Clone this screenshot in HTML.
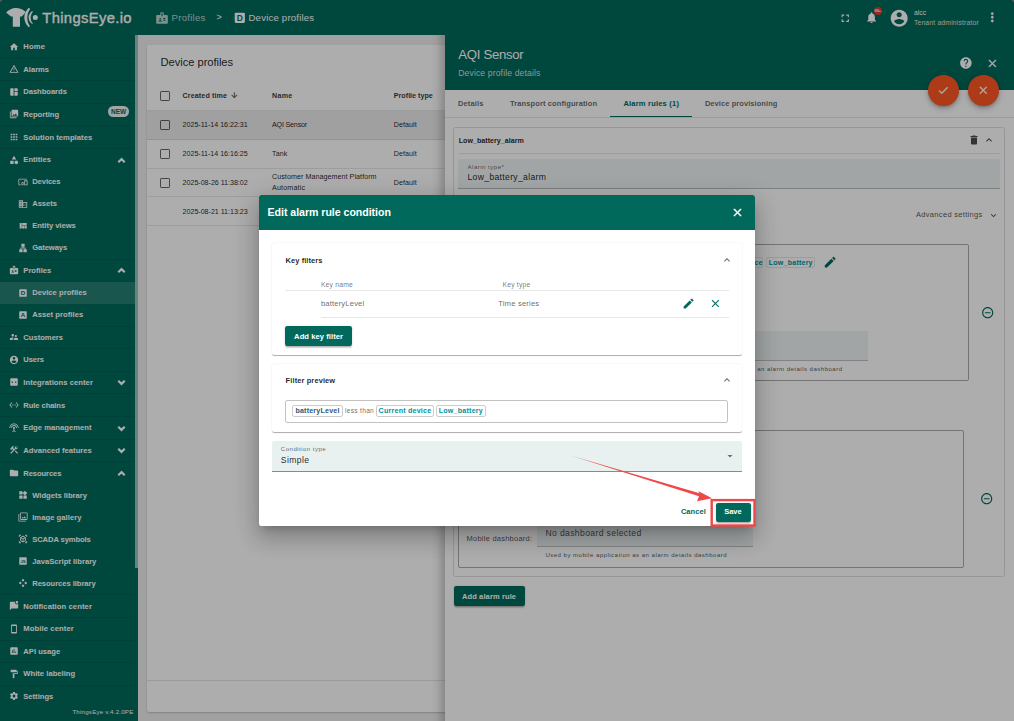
<!DOCTYPE html>
<html lang="en"><head><meta charset="utf-8"><title>ThingsEye.io - Device profiles</title>
<style>
*{box-sizing:border-box;margin:0;padding:0}
html,body{width:1014px;height:721px;overflow:hidden;background:#eee;font-family:"Liberation Sans",sans-serif;color:rgba(0,0,0,.87)}
.abs,.ic,.sep,.sel,.t{position:absolute}
.ic{display:block;overflow:visible}
.t{white-space:nowrap;line-height:12px}
#hdr{position:absolute;left:0;top:0;width:1014px;height:35.2px;background:#00695c}
#side{position:absolute;left:0;top:35.2px;width:138px;height:686px;background:#00695c}
.sep{left:0;width:135px;height:1px;background:rgba(0,0,0,.065)}
.sel{left:0;width:135px;height:22px;background:rgba(255,255,255,.15)}
#card{position:absolute;left:147px;top:45px;width:858px;height:666.6px;background:#fff;border-radius:2px;box-shadow:0 1px 2px rgba(0,0,0,.2)}
.row{position:absolute;left:147px;width:858px;border-bottom:1px solid rgba(0,0,0,.09)}
.cb{position:absolute;width:10px;height:10px;border:1.1px solid rgba(0,0,0,.6);border-radius:1.2px}
#drawer{position:absolute;left:445px;top:35.2px;width:569px;height:686px;background:#fff}
#dshadow{position:absolute;left:431px;top:35.2px;width:14px;height:686px;background:linear-gradient(to right,rgba(0,0,0,0),rgba(0,0,0,.04) 40%,rgba(0,0,0,.2))}
#dhead{position:absolute;left:0;top:0;width:569px;height:55.2px;background:#00695c}
#backdrop{position:absolute;left:0;top:0;width:1014px;height:721px;background:rgba(0,0,0,.32)}
#dlg{position:absolute;left:258.8px;top:195px;width:496px;height:331.2px;background:#fff;border-radius:2.2px;
 box-shadow:0 6px 8px -4px rgba(0,0,0,.2),0 13px 21px 2px rgba(0,0,0,.14),0 5px 25px 4px rgba(0,0,0,.12)}
#dlgt{position:absolute;left:0;top:0;width:496px;height:35.2px;background:#00695c;border-radius:2.2px 2.2px 0 0}
.panel{position:absolute;background:#fff;border-radius:2.2px;box-shadow:0 1.6px .6px -1.1px rgba(0,0,0,.2),0 1.1px .6px 0 rgba(0,0,0,.14),0 .6px 1.6px 0 rgba(0,0,0,.12)}
.chip{position:absolute;border:1px solid rgba(0,0,0,.1);border-radius:2.2px}
.btn{position:absolute;background:#00695c;border-radius:2.2px;
 box-shadow:0 1.6px .6px -1.1px rgba(0,0,0,.2),0 1.1px 1.1px 0 rgba(0,0,0,.14),0 .6px 2.8px 0 rgba(0,0,0,.12)}
.fab{position:absolute;width:30.8px;height:30.8px;border-radius:50%;background:#ff5722;box-shadow:0 1.6px 2.8px -.6px rgba(0,0,0,.2),0 3.3px 5.5px 0 rgba(0,0,0,.14),0 .6px 10px 0 rgba(0,0,0,.12)}
</style></head><body>

<!-- ============ top toolbar ============ -->
<div id="hdr"></div>
<svg class="ic" style="left:0;top:0;width:140px;height:35px" viewBox="0 0 140 35">
  <path fill="#fff" d="M6.100 12.500Q10.500 7.900 15.700 7.900Q21.500 7.900 25.800 12.100L21.900 16.400H20V26.800H12.800V16.400H10.900Z"/>
  <path fill="#fff" d="M28.700 7.800Q24.200 12.500 24.300 17.700Q24.500 23 28.700 27.300Q30 26.600 29.800 26.300Q27.100 22.500 27.200 17.700Q27.300 12.500 30 8.900Q30 8.300 28.700 7.800Z"/>
  <path fill="#fff" d="M32 10.900Q28.500 14 28.500 17.600Q28.500 21 32 24.100Q33 23.600 32.800 23.300Q30.600 21 30.600 17.600Q30.600 14 32.900 11.700Q33 11.300 32 10.900Z"/>
  <circle fill="#fff" cx="35.300" cy="17.500" r="2.500"/>
</svg>
<div class="t" style="left:42.30px;top:12.40px;font-size:14.8px;letter-spacing:0.340px;color:#ffffff;line-height:20px;margin-top:-4px;-webkit-text-stroke:.35px #fff">ThingsEye.io</div>
<svg class="ic" style="left:155.20px;top:10.90px;width:14px;height:14px;" viewBox="0 0 24 24"><path fill="rgba(255,255,255,.72)" d="M20 7h-5V4c0-1.100-.9-2-2-2h-2c-1.100 0-2 .9-2 2v3H4c-1.100 0-2 .9-2 2v11c0 1.100.9 2 2 2h16c1.100 0 2-.9 2-2V9c0-1.100-.9-2-2-2zM9 12c.83 0 1.500.67 1.500 1.500S9.830 15 9 15s-1.500-.67-1.500-1.500S8.170 12 9 12zm3 6H6v-.75c0-1 2-1.500 3-1.500s3 .5 3 1.500V18zm1-9h-2V4h2v5zm5 7.500h-4V15h4v1.500zm0-3h-4V12h4v1.500z"/></svg>
<div class="t" style="left:171.50px;top:11.80px;font-size:9.6px;letter-spacing:0.270px;color:rgba(255,255,255,.72);">Profiles</div>
<div class="t" style="left:216.50px;top:11.40px;font-size:9px;font-weight:bold;color:rgba(255,255,255,.8);">&gt;</div>
<svg class="ic" style="left:232.70px;top:11.40px;width:13.6px;height:13.6px" viewBox="0 0 24 24"><rect x="3" y="3" width="18" height="18" rx="2" fill="#ffffff"/><text x="12" y="17.3" text-anchor="middle" font-family="Liberation Sans, sans-serif" font-weight="bold" font-size="15" fill="#00695c">D</text></svg>
<div class="t" style="left:248.50px;top:11.80px;font-size:9.6px;letter-spacing:0.196px;color:#ffffff;">Device profiles</div>
<svg class="ic" style="left:838.95px;top:11.65px;width:12.5px;height:12.5px;" viewBox="0 0 24 24"><path fill="#ffffff" d="M7 14H5v5h5v-2H7v-3zm-2-4h2V7h3V5H5v5zm12 7h-3v2h5v-5h-2v3zM14 5v2h3v3h2V5h-5z"/></svg>
<svg class="ic" style="left:864.90px;top:11.40px;width:13.2px;height:13.2px;" viewBox="0 0 24 24"><path fill="#ffffff" d="M12 22c1.100 0 2-.9 2-2h-4c0 1.100.89 2 2 2zm6-6v-5c0-3.070-1.640-5.640-4.500-6.320V4c0-.83-.67-1.500-1.500-1.500s-1.500.67-1.500 1.500v.68C7.630 5.360 6 7.920 6 11v5l-2 2v1h16v-1l-2-2z"/></svg>
<div class="abs" style="left:873.8px;top:7.1px;width:8.4px;height:8.4px;border-radius:50%;background:#e53935"></div>
<div class="t" style="left:874.6px;top:8.7px;font-size:3.8px;line-height:5px;color:#fff;font-weight:bold">99+</div>
<svg class="ic" style="left:889.30px;top:7.60px;width:20.4px;height:20.4px;" viewBox="0 0 24 24"><path fill="#ffffff" d="M12 2C6.480 2 2 6.480 2 12s4.480 10 10 10 10-4.480 10-10S17.520 2 12 2zm0 3c1.660 0 3 1.340 3 3s-1.340 3-3 3-3-1.340-3-3 1.340-3 3-3zm0 14.200c-2.500 0-4.710-1.280-6-3.220.030-1.990 4-3.080 6-3.080 1.990 0 5.970 1.090 6 3.080-1.290 1.940-3.500 3.220-6 3.220z"/></svg>
<div class="t" style="left:913.90px;top:6.90px;font-size:6.8px;letter-spacing:0.069px;color:#ffffff;">alcc</div>
<div class="t" style="left:913.90px;top:17.30px;font-size:6.8px;letter-spacing:0.173px;color:rgba(255,255,255,.85);">Tenant administrator</div>
<svg class="ic" style="left:984.70px;top:10.30px;width:14.6px;height:14.6px;stroke:#fff;stroke-width:.6" viewBox="0 0 24 24"><path fill="#ffffff" d="M12 8c1.100 0 2-.9 2-2s-.9-2-2-2-2 .9-2 2 .9 2 2 2zm0 2c-1.100 0-2 .9-2 2s.9 2 2 2 2-.9 2-2-.9-2-2-2zm0 6c-1.100 0-2 .9-2 2s.9 2 2 2 2-.9 2-2-.9-2-2-2z"/></svg>

<!-- ============ side menu ============ -->
<div id="side"></div>
<svg class="ic" style="left:8.70px;top:41.70px;width:10px;height:10px;" viewBox="0 0 24 24"><path fill="#ffffff" d="M10 20v-6h4v6h5v-8h3L12 3 2 12h3v8z"/></svg>
<div class="t" style="left:23.30px;top:41.30px;font-size:7.6px;font-weight:bold;letter-spacing:0.195px;color:#ffffff;">Home</div>
<div class="sep" style="top:57.60px"></div>
<svg class="ic" style="left:8.70px;top:64.20px;width:10px;height:10px;" viewBox="0 0 24 24"><path fill="#ffffff" d="M12 5.99L19.53 19H4.47L12 5.99M12 2L1 21h22L12 2zm1 14h-2v2h2v-2zm0-6h-2v4h2v-4z"/></svg>
<div class="t" style="left:23.30px;top:63.80px;font-size:7.6px;font-weight:bold;letter-spacing:0.006px;color:#ffffff;">Alarms</div>
<div class="sep" style="top:80.20px"></div>
<svg class="ic" style="left:8.70px;top:86.80px;width:10px;height:10px;" viewBox="0 0 24 24"><path fill="#ffffff" d="M11 21H5c-1.1 0-2-.9-2-2V5c0-1.100.9-2 2-2h6v18zm2 0h6c1.100 0 2-.9 2-2v-7h-8v9zm8-11V5c0-1.100-.9-2-2-2h-6v7h8z"/></svg>
<div class="t" style="left:23.30px;top:86.40px;font-size:7.6px;font-weight:bold;letter-spacing:-0.036px;color:#ffffff;">Dashboards</div>
<div class="sep" style="top:102.70px"></div>
<svg class="ic" style="left:8.70px;top:109.30px;width:10px;height:10px;" viewBox="0 0 24 24"><path fill="#ffffff" d="M22 16V4c0-1.100-.9-2-2-2H8c-1.100 0-2 .9-2 2v12c0 1.100.9 2 2 2h12c1.100 0 2-.9 2-2zm-11-4l2.030 2.710L16 11l4 5H8l3-4zM2 6v14c0 1.100.9 2 2 2h14v-2H4V6H2z"/></svg>
<div class="t" style="left:23.30px;top:108.90px;font-size:7.6px;font-weight:bold;letter-spacing:-0.011px;color:#ffffff;">Reporting</div>
<div class="sep" style="top:125.40px"></div>
<svg class="ic" style="left:8.70px;top:132.00px;width:10px;height:10px;" viewBox="0 0 24 24"><path fill="#ffffff" d="M4 8h4V4H4v4zm6 12h4v-4h-4v4zm-6 0h4v-4H4v4zm0-6h4v-4H4v4zm6 0h4v-4h-4v4zm6-10v4h4V4h-4zm-6 4h4V4h-4v4zm6 6h4v-4h-4v4zm0 6h4v-4h-4v4z"/></svg>
<div class="t" style="left:23.30px;top:131.60px;font-size:7.6px;font-weight:bold;letter-spacing:0.054px;color:#ffffff;">Solution templates</div>
<div class="sep" style="top:148.10px"></div>
<svg class="ic" style="left:8.70px;top:154.70px;width:10px;height:10px;" viewBox="0 0 24 24"><path fill="#ffffff" d="M12 2l-5.500 9h11z M17.500 13a4.500 4.500 0 100 9 4.500 4.500 0 000-9z M3 13.500h8v8H3z"/></svg>
<div class="t" style="left:23.30px;top:154.30px;font-size:7.6px;font-weight:bold;letter-spacing:0.021px;color:#ffffff;">Entities</div>
<svg class="ic" style="left:115.00px;top:153.50px;width:13px;height:13px;stroke:#fff;stroke-width:1.9" viewBox="0 0 24 24"><path fill="#ffffff" d="M12 8l-6 6 1.410 1.410L12 10.830l4.590 4.580L18 14z"/></svg>
<svg class="ic" style="left:17.70px;top:176.90px;width:10px;height:10px;" viewBox="0 0 24 24"><path fill="#ffffff" d="M3 6h18V4H3c-1.100 0-2 .9-2 2v12c0 1.100.9 2 2 2h4v-2H3V6zm10 6H9v1.780c-.61.550-1 1.330-1 2.220s.39 1.670 1 2.220V20h4v-1.780c.61-.55 1-1.340 1-2.220s-.39-1.670-1-2.220V12zm-2 5.500c-.83 0-1.500-.67-1.500-1.500s.67-1.500 1.500-1.500 1.500.67 1.500 1.500-.67 1.500-1.500 1.500zM22 8h-6c-.5 0-1 .5-1 1v10c0 .5.5 1 1 1h6c.5 0 1-.5 1-1V9c0-.5-.5-1-1-1zm-1 10h-4v-8h4v8z"/></svg>
<div class="t" style="left:32.20px;top:175.90px;font-size:7.6px;font-weight:bold;letter-spacing:-0.072px;color:#ffffff;">Devices</div>
<svg class="ic" style="left:17.70px;top:198.90px;width:10px;height:10px;" viewBox="0 0 24 24"><path fill="#ffffff" d="M12 7V3H2v18h20V7H12zM6 19H4v-2h2v2zm0-4H4v-2h2v2zm0-4H4V9h2v2zm0-4H4V5h2v2zm4 12H8v-2h2v2zm0-4H8v-2h2v2zm0-4H8V9h2v2zm0-4H8V5h2v2zm10 12h-8v-2h2v-2h-2v-2h2v-2h-2V9h8v10zm-2-8h-2v2h2v-2zm0 4h-2v2h2v-2z"/></svg>
<div class="t" style="left:32.20px;top:197.90px;font-size:7.6px;font-weight:bold;letter-spacing:-0.045px;color:#ffffff;">Assets</div>
<svg class="ic" style="left:17.70px;top:220.90px;width:10px;height:10px;" viewBox="0 0 24 24"><path fill="#ffffff" d="M10 18h5v-6h-5v6zm-6 0h5V5H4v13zm12 0h5v-6h-5v6zM10 5v6h11V5H10z"/></svg>
<div class="t" style="left:32.20px;top:219.90px;font-size:7.6px;font-weight:bold;letter-spacing:-0.030px;color:#ffffff;">Entity views</div>
<svg class="ic" style="left:17.70px;top:242.90px;width:10px;height:10px;" viewBox="0 0 24 24"><path fill="#ffffff" d="M13 22h8v-7h-3v-4h-5V9h3V2H8v7h3v2H6v4H3v7h8v-7H8v-2h8v2h-3z"/></svg>
<div class="t" style="left:32.20px;top:241.90px;font-size:7.6px;font-weight:bold;letter-spacing:-0.055px;color:#ffffff;">Gateways</div>
<div class="sep" style="top:258.70px"></div>
<svg class="ic" style="left:8.70px;top:265.30px;width:10px;height:10px;" viewBox="0 0 24 24"><path fill="#ffffff" d="M20 7h-5V4c0-1.100-.9-2-2-2h-2c-1.100 0-2 .9-2 2v3H4c-1.100 0-2 .9-2 2v11c0 1.100.9 2 2 2h16c1.100 0 2-.9 2-2V9c0-1.100-.9-2-2-2zM9 12c.83 0 1.500.67 1.500 1.500S9.830 15 9 15s-1.500-.67-1.500-1.500S8.170 12 9 12zm3 6H6v-.75c0-1 2-1.500 3-1.500s3 .5 3 1.500V18zm1-9h-2V4h2v5zm5 7.500h-4V15h4v1.500zm0-3h-4V12h4v1.500z"/></svg>
<div class="t" style="left:23.30px;top:264.90px;font-size:7.6px;font-weight:bold;letter-spacing:0.018px;color:#ffffff;">Profiles</div>
<svg class="ic" style="left:115.00px;top:264.10px;width:13px;height:13px;stroke:#fff;stroke-width:1.9" viewBox="0 0 24 24"><path fill="#ffffff" d="M12 8l-6 6 1.410 1.410L12 10.830l4.590 4.580L18 14z"/></svg>
<div class="sel" style="top:281.50px"></div>
<svg class="ic" style="left:17.70px;top:287.50px;width:10px;height:10px" viewBox="0 0 24 24"><rect x="3" y="3" width="18" height="18" rx="2" fill="#ffffff"/><text x="12" y="17.3" text-anchor="middle" font-family="Liberation Sans, sans-serif" font-weight="bold" font-size="15" fill="#00695c">D</text></svg>
<div class="t" style="left:32.20px;top:286.50px;font-size:7.6px;font-weight:bold;letter-spacing:0.031px;color:#ffffff;">Device profiles</div>
<svg class="ic" style="left:17.70px;top:309.60px;width:10px;height:10px" viewBox="0 0 24 24"><rect x="3" y="3" width="18" height="18" rx="2" fill="#ffffff"/><text x="12" y="17.3" text-anchor="middle" font-family="Liberation Sans, sans-serif" font-weight="bold" font-size="15" fill="#00695c">A</text></svg>
<div class="t" style="left:32.20px;top:308.60px;font-size:7.6px;font-weight:bold;letter-spacing:0.057px;color:#ffffff;">Asset profiles</div>
<div class="sep" style="top:325.60px"></div>
<svg class="ic" style="left:8.70px;top:332.20px;width:10px;height:10px;" viewBox="0 0 24 24"><path fill="#ffffff" d="M16.500 12c1.380 0 2.490-1.120 2.490-2.500S17.880 7 16.500 7C15.120 7 14 8.120 14 9.500s1.120 2.500 2.500 2.500zM9 11c1.660 0 2.990-1.340 2.990-3S10.660 5 9 5C7.340 5 6 6.340 6 8s1.340 3 3 3zm7.500 3c-1.830 0-5.500.920-5.500 2.750V19h11v-2.250c0-1.830-3.670-2.750-5.500-2.750zM9 13c-2.330 0-7 1.170-7 3.500V19h7v-2.250c0-.85.330-2.340 2.370-3.470C10.500 13.100 9.660 13 9 13z"/></svg>
<div class="t" style="left:23.30px;top:331.80px;font-size:7.6px;font-weight:bold;letter-spacing:0.012px;color:#ffffff;">Customers</div>
<div class="sep" style="top:348.20px"></div>
<svg class="ic" style="left:8.70px;top:354.80px;width:10px;height:10px;" viewBox="0 0 24 24"><path fill="#ffffff" d="M12 2C6.480 2 2 6.480 2 12s4.480 10 10 10 10-4.480 10-10S17.520 2 12 2zm0 3c1.660 0 3 1.340 3 3s-1.340 3-3 3-3-1.340-3-3 1.340-3 3-3zm0 14.200c-2.500 0-4.710-1.280-6-3.220.030-1.990 4-3.080 6-3.080 1.990 0 5.970 1.090 6 3.080-1.290 1.940-3.500 3.220-6 3.220z"/></svg>
<div class="t" style="left:23.30px;top:354.40px;font-size:7.6px;font-weight:bold;letter-spacing:-0.107px;color:#ffffff;">Users</div>
<div class="sep" style="top:370.80px"></div>
<svg class="ic" style="left:8.70px;top:377.40px;width:10px;height:10px;" viewBox="0 0 24 24"><path fill="#ffffff" d="M19 3H5c-1.100 0-2 .9-2 2v14c0 1.100.9 2 2 2h14c1.100 0 2-.9 2-2V5c0-1.100-.9-2-2-2zM9.500 13.500h-3v-3h3v3zm8 0h-3v-3h3v3z"/></svg>
<div class="t" style="left:23.30px;top:377.00px;font-size:7.6px;font-weight:bold;letter-spacing:0.066px;color:#ffffff;">Integrations center</div>
<svg class="ic" style="left:115.00px;top:376.20px;width:13px;height:13px;stroke:#fff;stroke-width:1.9" viewBox="0 0 24 24"><path fill="#ffffff" d="M16.590 8.590L12 13.170 7.410 8.590 6 10l6 6 6-6z"/></svg>
<div class="sep" style="top:393.40px"></div>
<svg class="ic" style="left:8.70px;top:400.00px;width:10px;height:10px;" viewBox="0 0 24 24"><path fill="#ffffff" d="M7.770 6.760L6.230 5.480.820 12l5.410 6.520 1.540-1.280L3.420 12l4.350-5.240zM7 13h2v-2H7v2zm10-2h-2v2h2v-2zm-6 2h2v-2h-2v2zm6.770-7.520l-1.540 1.280L20.580 12l-4.350 5.240 1.540 1.280L23.180 12l-5.410-6.520z"/></svg>
<div class="t" style="left:23.30px;top:399.60px;font-size:7.6px;font-weight:bold;letter-spacing:-0.076px;color:#ffffff;">Rule chains</div>
<div class="sep" style="top:416.10px"></div>
<svg class="ic" style="left:8.70px;top:422.70px;width:10px;height:10px;" viewBox="0 0 24 24"><path fill="#ffffff" d="M12 5c-3.870 0-7 3.130-7 7h2c0-2.760 2.240-5 5-5s5 2.240 5 5h2c0-3.870-3.130-7-7-7zm1 9.290c.880-.39 1.500-1.260 1.500-2.290 0-1.380-1.120-2.500-2.500-2.500S9.500 10.620 9.500 12c0 1.020.620 1.900 1.500 2.290v3.300L7.590 21 9 22.410l3-3 3 3L16.410 21 13 17.590v-3.300zM12 1C5.930 1 1 5.930 1 12h2c0-4.970 4.030-9 9-9s9 4.030 9 9h2c0-6.070-4.930-11-11-11z"/></svg>
<div class="t" style="left:23.30px;top:422.30px;font-size:7.6px;font-weight:bold;letter-spacing:0.045px;color:#ffffff;">Edge management</div>
<svg class="ic" style="left:115.00px;top:421.50px;width:13px;height:13px;stroke:#fff;stroke-width:1.9" viewBox="0 0 24 24"><path fill="#ffffff" d="M16.590 8.590L12 13.170 7.410 8.590 6 10l6 6 6-6z"/></svg>
<div class="sep" style="top:438.70px"></div>
<svg class="ic" style="left:8.70px;top:445.30px;width:10px;height:10px;" viewBox="0 0 24 24"><path fill="#ffffff" d="M13.783 15.172l2.121-2.121 5.996 5.996-2.121 2.121zM17.500 10c1.930 0 3.500-1.570 3.500-3.500 0-.58-.16-1.120-.41-1.600l-2.700 2.700-1.490-1.490 2.700-2.700c-.48-.25-1.020-.41-1.600-.41C15.570 3 14 4.570 14 6.500c0 .41.080.8.210 1.160l-1.850 1.850-1.780-1.780.71-.71-1.410-1.410L12 3.490a3 3 0 00-4.240 0L4.220 7.030l1.410 1.410H2.810l-.71.71 3.540 3.540.71-.71V9.150l1.410 1.410.71-.71 1.780 1.780-7.410 7.410 2.120 2.120L16.340 9.790c.36.130.75.210 1.160.21z"/></svg>
<div class="t" style="left:23.30px;top:444.90px;font-size:7.6px;font-weight:bold;letter-spacing:0.037px;color:#ffffff;">Advanced features</div>
<svg class="ic" style="left:115.00px;top:444.10px;width:13px;height:13px;stroke:#fff;stroke-width:1.9" viewBox="0 0 24 24"><path fill="#ffffff" d="M16.590 8.590L12 13.170 7.410 8.590 6 10l6 6 6-6z"/></svg>
<div class="sep" style="top:461.40px"></div>
<svg class="ic" style="left:8.70px;top:468.00px;width:10px;height:10px;" viewBox="0 0 24 24"><path fill="#ffffff" d="M10 4H4c-1.100 0-1.990.9-1.990 2L2 18c0 1.100.9 2 2 2h16c1.100 0 2-.9 2-2V8c0-1.100-.9-2-2-2h-8l-2-2z"/></svg>
<div class="t" style="left:23.30px;top:467.60px;font-size:7.6px;font-weight:bold;letter-spacing:-0.096px;color:#ffffff;">Resources</div>
<svg class="ic" style="left:115.00px;top:466.80px;width:13px;height:13px;stroke:#fff;stroke-width:1.9" viewBox="0 0 24 24"><path fill="#ffffff" d="M12 8l-6 6 1.410 1.410L12 10.830l4.590 4.580L18 14z"/></svg>
<svg class="ic" style="left:17.70px;top:490.10px;width:10px;height:10px;" viewBox="0 0 24 24"><path fill="#ffffff" d="M13 13v8h8v-8h-8zM3 21h8v-8H3v8zM3 3v8h8V3H3zm13.660-1.310L11 7.340 16.660 13l5.660-5.660-5.660-5.650z"/></svg>
<div class="t" style="left:32.20px;top:490.10px;font-size:7.6px;font-weight:bold;letter-spacing:-0.002px;color:#ffffff;">Widgets library</div>
<svg class="ic" style="left:17.70px;top:512.10px;width:10px;height:10px;" viewBox="0 0 24 24"><path fill="#ffffff" d="M15.960 10.290l-2.750 3.540-1.960-2.360L8.500 15h11l-3.540-4.710zM3 5H1v16c0 1.100.9 2 2 2h16v-2H3V5zm18-4H7c-1.100 0-2 .9-2 2v14c0 1.100.9 2 2 2h14c1.100 0 2-.9 2-2V3c0-1.100-.9-2-2-2zm0 16H7V3h14v14z"/></svg>
<div class="t" style="left:32.20px;top:512.10px;font-size:7.6px;font-weight:bold;letter-spacing:0.060px;color:#ffffff;">Image gallery</div>
<svg class="ic" style="left:17.70px;top:534.10px;width:10px;height:10px;" viewBox="0 0 24 24"><path fill="#ffffff" d="M18.250 7.600l-5.500-3.180c-.46-.27-1.040-.27-1.500 0L5.750 7.600c-.46.270-.75.760-.75 1.300v6.350c0 .54.290 1.030.75 1.300l5.500 3.180c.46.270 1.040.270 1.500 0l5.500-3.180c.46-.27.75-.76.75-1.300V8.900c0-.54-.29-1.030-.75-1.300zM7 14.960v-4.620l4 2.320v4.610l-4-2.310zm5-4.030L8 8.610l4-2.310 4 2.310-4 2.320zm1 6.340v-4.610l4-2.320v4.620l-4 2.310zM7 2H3.500C2.670 2 2 2.670 2 3.500V7h2V4h3V2zm10 0h3.500c.83 0 1.500.67 1.500 1.500V7h-2V4h-3V2zM7 22H3.500c-.83 0-1.500-.67-1.500-1.500V17h2v3h3v2zm10 0h3.500c.83 0 1.500-.67 1.500-1.500V17h-2v3h-3v2z"/></svg>
<div class="t" style="left:32.20px;top:534.10px;font-size:7.6px;font-weight:bold;letter-spacing:-0.082px;color:#ffffff;">SCADA symbols</div>
<svg class="ic" style="left:17.70px;top:556.10px;width:10px;height:10px" viewBox="0 0 24 24"><rect x="3" y="3" width="18" height="18" rx="2" fill="#ffffff"/><text x="12" y="17.3" text-anchor="middle" font-family="Liberation Sans, sans-serif" font-weight="bold" font-size="10" fill="#00695c">JS</text></svg>
<div class="t" style="left:32.20px;top:556.10px;font-size:7.6px;font-weight:bold;letter-spacing:0.024px;color:#ffffff;">JavaScript library</div>
<svg class="ic" style="left:17.70px;top:578.10px;width:10px;height:10px;" viewBox="0 0 24 24"><path fill="#ffffff" d="M12 2l3.500 3.500L12 9 8.500 5.500zM18.500 8.500L22 12l-3.500 3.500L15 12zM5.500 8.500L9 12l-3.500 3.500L2 12zM12 15l3.500 3.500L12 22l-3.500-3.500z"/></svg>
<div class="t" style="left:32.20px;top:578.10px;font-size:7.6px;font-weight:bold;letter-spacing:-0.044px;color:#ffffff;">Resources library</div>
<div class="sep" style="top:594.20px"></div>
<svg class="ic" style="left:8.70px;top:600.80px;width:10px;height:10px;" viewBox="0 0 24 24"><path fill="#ffffff" d="M22 7v9c0 1.100-.9 2-2 2H6l-4 4V4c0-1.100.9-2 2-2h10.100c-.07.320-.10.660-.10 1 0 2.760 2.240 5 5 5 1.130 0 2.160-.37 3-1zM16 3c0 1.660 1.340 3 3 3s3-1.340 3-3-1.340-3-3-3-3 1.340-3 3z"/></svg>
<div class="t" style="left:23.30px;top:601.00px;font-size:7.6px;font-weight:bold;letter-spacing:0.104px;color:#ffffff;">Notification center</div>
<div class="sep" style="top:616.90px"></div>
<svg class="ic" style="left:8.70px;top:623.50px;width:10px;height:10px;" viewBox="0 0 24 24"><path fill="#ffffff" d="M17 1.010L7 1c-1.100 0-2 .9-2 2v18c0 1.100.9 2 2 2h10c1.100 0 2-.9 2-2V3c0-1.100-.9-1.990-2-1.990zM17 19H7V5h10v14z"/></svg>
<div class="t" style="left:23.30px;top:623.40px;font-size:7.6px;font-weight:bold;letter-spacing:0.126px;color:#ffffff;">Mobile center</div>
<div class="sep" style="top:639.50px"></div>
<svg class="ic" style="left:8.70px;top:646.10px;width:10px;height:10px;" viewBox="0 0 24 24"><path fill="#ffffff" d="M19 3H5c-1.100 0-2 .9-2 2v14c0 1.100.9 2 2 2h14c1.100 0 2-.9 2-2V5c0-1.100-.9-2-2-2zM9 17H7v-7h2v7zm4 0h-2V7h2v10zm4 0h-2v-4h2v4z"/></svg>
<div class="t" style="left:23.30px;top:645.70px;font-size:7.6px;font-weight:bold;letter-spacing:0.019px;color:#ffffff;">API usage</div>
<div class="sep" style="top:662.20px"></div>
<svg class="ic" style="left:8.70px;top:668.80px;width:10px;height:10px;" viewBox="0 0 24 24"><path fill="#ffffff" d="M18 4V3c0-.55-.45-1-1-1H5c-.55 0-1 .45-1 1v4c0 .55.45 1 1 1h12c.55 0 1-.45 1-1V6h1v4H9v11c0 .55.45 1 1 1h2c.55 0 1-.45 1-1v-9h8V4h-3z"/></svg>
<div class="t" style="left:23.30px;top:668.40px;font-size:7.6px;font-weight:bold;letter-spacing:0.030px;color:#ffffff;">White labeling</div>
<div class="sep" style="top:684.80px"></div>
<svg class="ic" style="left:8.70px;top:691.40px;width:10px;height:10px;" viewBox="0 0 24 24"><path fill="#ffffff" d="M19.140 12.940c.040-.3.060-.61.060-.940 0-.32-.020-.64-.070-.940l2.030-1.580c.180-.14.230-.41.120-.61l-1.920-3.320c-.12-.22-.37-.29-.59-.22l-2.390.960c-.5-.38-1.030-.7-1.620-.940l-.36-2.540c-.04-.24-.24-.41-.48-.41h-3.840c-.24 0-.43.170-.47.410l-.36 2.540c-.59.240-1.130.570-1.620.940l-2.390-.960c-.22-.08-.47 0-.59.220L2.740 8.870c-.12.210-.08.470.12.610l2.030 1.580c-.05.3-.09.630-.09.940s.020.640.070.940l-2.030 1.580c-.18.140-.23.410-.12.610l1.920 3.320c.12.220.37.290.59.220l2.390-.960c.5.380 1.030.7 1.620.940l.36 2.540c.05.240.24.410.48.410h3.840c.24 0 .44-.17.470-.41l.36-2.540c.59-.24 1.130-.56 1.620-.940l2.390.960c.22.080.47 0 .59-.22l1.920-3.320c.12-.22.070-.47-.12-.61l-2.010-1.580zM12 15.600c-1.980 0-3.600-1.620-3.600-3.600s1.620-3.600 3.600-3.600 3.600 1.620 3.600 3.600-1.620 3.600-3.600 3.600z"/></svg>
<div class="t" style="left:23.30px;top:691.00px;font-size:7.6px;font-weight:bold;letter-spacing:0.003px;color:#ffffff;">Settings</div>
<div class="abs" style="left:107.8px;top:106.3px;width:21.2px;height:10.6px;border-radius:5.3px;background:rgba(255,255,255,.93)"></div>
<div class="t" style="left:110.90px;top:105.90px;font-size:6.5px;font-weight:bold;letter-spacing:0.068px;color:#00695c;">NEW</div>
<div class="abs" style="left:135px;top:35.2px;width:3px;height:532.6px;background:rgba(255,255,255,.6)"></div>
<div class="t" style="left:72.40px;top:705.50px;font-size:6.1px;letter-spacing:0.244px;color:#ffffff;">ThingsEye v.4.2.0PE</div>

<!-- ============ main content: entities table ============ -->
<div id="card"></div>
<div class="t" style="left:160.60px;top:56.10px;font-size:11.2px;letter-spacing:-0.061px;color:rgba(0,0,0,.87);line-height:14px;margin-top:-1px">Device profiles</div>
<div class="abs" style="left:147px;top:110px;width:858px;height:1px;background:rgba(0,0,0,.09)"></div>
<div class="cb" style="left:160.2px;top:90.5px"></div>
<div class="t" style="left:182.60px;top:89.80px;font-size:7.2px;font-weight:bold;letter-spacing:0.071px;color:rgba(0,0,0,.8);">Created time</div>
<svg class="ic" style="left:229.60px;top:91.30px;width:8.6px;height:8.6px;stroke:rgba(0,0,0,.5);stroke-width:.8" viewBox="0 0 24 24"><path fill="rgba(0,0,0,.62)" d="M20 12l-1.410-1.410L13 16.170V4h-2v12.170l-5.580-5.590L4 12l8 8 8-8z"/></svg>
<div class="t" style="left:272.00px;top:89.80px;font-size:7.2px;font-weight:bold;letter-spacing:0.263px;color:rgba(0,0,0,.8);">Name</div>
<div class="t" style="left:393.80px;top:89.80px;font-size:7.2px;font-weight:bold;letter-spacing:-0.010px;color:rgba(0,0,0,.8);">Profile type</div>

<div class="abs" style="left:147px;top:111px;width:858px;height:28px;background:rgba(0,0,0,.075)"></div>
<div class="abs" style="left:147px;top:139px;width:858px;height:1px;background:rgba(0,0,0,.15)"></div>
<div class="cb" style="left:160.2px;top:119.8px"></div>
<div class="t" style="left:182.60px;top:119.40px;font-size:7.15px;letter-spacing:-0.037px;color:rgba(0,0,0,.87);">2025-11-14 16:22:31</div>
<div class="t" style="left:272.00px;top:119.40px;font-size:7.15px;letter-spacing:-0.195px;color:rgba(0,0,0,.87);">AQI Sensor</div>
<div class="t" style="left:393.80px;top:119.40px;font-size:7.15px;letter-spacing:0.041px;color:rgba(0,0,0,.87);">Default</div>

<div class="abs" style="left:147px;top:168px;width:858px;height:1px;background:rgba(0,0,0,.09)"></div>
<div class="cb" style="left:160.2px;top:148.6px"></div>
<div class="t" style="left:182.60px;top:148.20px;font-size:7.15px;letter-spacing:-0.037px;color:rgba(0,0,0,.87);">2025-11-14 16:16:25</div>
<div class="t" style="left:272.00px;top:148.20px;font-size:7.15px;letter-spacing:0.099px;color:rgba(0,0,0,.87);">Tank</div>
<div class="t" style="left:393.80px;top:148.20px;font-size:7.15px;letter-spacing:0.041px;color:rgba(0,0,0,.87);">Default</div>

<div class="abs" style="left:147px;top:196px;width:858px;height:1px;background:rgba(0,0,0,.09)"></div>
<div class="cb" style="left:160.2px;top:178px"></div>
<div class="t" style="left:182.60px;top:177.10px;font-size:7.15px;letter-spacing:-0.037px;color:rgba(0,0,0,.87);">2025-08-26 11:38:02</div>
<div class="t" style="left:272.00px;top:171.00px;font-size:7.15px;letter-spacing:0.051px;color:rgba(0,0,0,.87);">Customer Management Platform</div>
<div class="t" style="left:272.00px;top:182.00px;font-size:7.15px;letter-spacing:0.151px;color:rgba(0,0,0,.87);">Automatic</div>
<div class="t" style="left:393.80px;top:177.10px;font-size:7.15px;letter-spacing:0.041px;color:rgba(0,0,0,.87);">Default</div>

<div class="abs" style="left:147px;top:225px;width:858px;height:1px;background:rgba(0,0,0,.09)"></div>
<div class="t" style="left:182.60px;top:205.60px;font-size:7.15px;letter-spacing:-0.037px;color:rgba(0,0,0,.87);">2025-08-21 11:13:23</div>
<div class="abs" style="left:147px;top:680px;width:858px;height:1px;background:rgba(0,0,0,.1)"></div>

<!-- ============ details drawer ============ -->
<div id="dshadow"></div>
<div id="drawer"><div id="dhead"></div></div>
<div class="t" style="left:458.20px;top:49.40px;font-size:13.2px;letter-spacing:-0.292px;color:#ffffff;line-height:16px;margin-top:-2px">AQI Sensor</div>
<div class="t" style="left:458.20px;top:66.60px;font-size:8.6px;letter-spacing:0.136px;color:rgba(255,255,255,.8);">Device profile details</div>
<svg class="ic" style="left:958.60px;top:56.20px;width:13.8px;height:13.8px;" viewBox="0 0 24 24"><path fill="#ffffff" d="M12 2C6.480 2 2 6.480 2 12s4.480 10 10 10 10-4.480 10-10S17.520 2 12 2zm1 17h-2v-2h2v2zm2.070-7.750l-.9.920C13.450 12.900 13 13.500 13 15h-2v-.5c0-1.100.45-2.100 1.170-2.830l1.240-1.260c.37-.36.59-.86.59-1.410 0-1.100-.9-2-2-2s-2 .9-2 2H8c0-2.210 1.790-4 4-4s4 1.790 4 4c0 .88-.36 1.680-.93 2.250z"/></svg>
<svg class="ic" style="left:985.60px;top:56.60px;width:12.8px;height:12.8px;stroke:#fff;stroke-width:.7" viewBox="0 0 24 24"><path fill="#ffffff" d="M19 6.410L17.590 5 12 10.590 6.410 5 5 6.410 10.590 12 5 17.590 6.410 19 12 13.410 17.590 19 19 17.590 13.410 12z"/></svg>
<div class="fab" style="left:928.3px;top:75.1px"></div>
<svg class="ic" style="left:937.45px;top:84.25px;width:12.5px;height:12.5px;stroke:#fff;stroke-width:.7" viewBox="0 0 24 24"><path fill="#ffffff" d="M9 16.170L4.830 12l-1.420 1.410L9 19 21 7l-1.410-1.410z"/></svg>
<div class="fab" style="left:967.9px;top:75.1px"></div>
<svg class="ic" style="left:977.05px;top:84.25px;width:12.5px;height:12.5px;stroke:#fff;stroke-width:.7" viewBox="0 0 24 24"><path fill="#ffffff" d="M19 6.410L17.590 5 12 10.590 6.410 5 5 6.410 10.590 12 5 17.590 6.410 19 12 13.410 17.590 19 19 17.590 13.410 12z"/></svg>
<div class="abs" style="left:445px;top:116.5px;width:569px;height:1px;background:rgba(0,0,0,.1)"></div>
<div class="t" style="left:458.00px;top:97.60px;font-size:7.5px;font-weight:bold;letter-spacing:0.117px;color:rgba(0,0,0,.62);">Details</div>
<div class="t" style="left:510.00px;top:97.60px;font-size:7.5px;font-weight:bold;letter-spacing:0.110px;color:rgba(0,0,0,.62);">Transport configuration</div>
<div class="t" style="left:623.40px;top:97.60px;font-size:7.5px;font-weight:bold;letter-spacing:0.213px;color:#00695c;">Alarm rules (1)</div>
<div class="t" style="left:704.90px;top:97.60px;font-size:7.5px;font-weight:bold;letter-spacing:0.068px;color:rgba(0,0,0,.62);">Device provisioning</div>
<div class="abs" style="left:610px;top:115.8px;width:82px;height:1.2px;background:#00695c"></div>
<div class="abs" style="left:453.3px;top:126.5px;width:552px;height:450.4px;border:1px solid rgba(0,0,0,.13);border-radius:2.5px"></div>
<div class="t" style="left:458.70px;top:134.90px;font-size:7.1px;font-weight:bold;letter-spacing:0.030px;color:rgba(0,0,0,.87);">Low_battery_alarm</div>
<svg class="ic" style="left:967.80px;top:134.10px;width:12px;height:12px;" viewBox="0 0 24 24"><path fill="rgba(0,0,0,.7)" d="M6 19c0 1.100.9 2 2 2h8c1.100 0 2-.9 2-2V7H6v12zM19 4h-3.500l-1-1h-5l-1 1H5v2h14V4z"/></svg>
<svg class="ic" style="left:983.30px;top:133.80px;width:12px;height:12px;" viewBox="0 0 24 24"><path fill="rgba(0,0,0,.7)" d="M12 8l-6 6 1.410 1.410L12 10.830l4.590 4.580L18 14z"/></svg>
<div class="abs" style="left:458.5px;top:152.8px;width:541.5px;height:1px;background:rgba(0,0,0,.09)"></div>
<div class="abs" style="left:458.4px;top:158.5px;width:541.6px;height:30.9px;background:#edf4f4;border-bottom:1px solid rgba(0,0,0,.22);border-radius:2.2px 2.2px 0 0"></div>
<div class="t" style="left:467.50px;top:161.40px;font-size:6.2px;letter-spacing:0.445px;color:rgba(0,0,0,.6);">Alarm type*</div>
<div class="t" style="left:467.50px;top:171.40px;font-size:8.6px;letter-spacing:0.335px;color:rgba(0,0,0,.87);">Low_battery_alarm</div>
<div class="t" style="left:916.00px;top:208.60px;font-size:7.5px;letter-spacing:0.313px;color:rgba(0,0,0,.7);">Advanced settings</div>
<svg class="ic" style="left:988.10px;top:209.80px;width:11px;height:11px;" viewBox="0 0 24 24"><path fill="rgba(0,0,0,.7)" d="M16.590 8.590L12 13.170 7.410 8.590 6 10l6 6 6-6z"/></svg>
<div class="abs" style="left:458.3px;top:243.6px;width:510.4px;height:137.3px;border:1px solid rgba(0,0,0,.33);border-radius:2px"></div>
<div class="t" style="left:754.60px;top:257.00px;font-size:7.1px;font-weight:bold;color:#00919b;">ce</div>
<div class="chip" style="left:735px;top:256.7px;width:28px;height:11.5px"></div>
<div class="chip" style="left:765.8px;top:256.7px;width:49.3px;height:11.5px"></div>
<div class="t" style="left:768.80px;top:257.00px;font-size:7.1px;font-weight:bold;letter-spacing:0.198px;color:#00919b;">Low_battery</div>
<svg class="ic" style="left:823.40px;top:254.80px;width:14.4px;height:14.4px;" viewBox="0 0 24 24"><path fill="#00695c" d="M3 17.250V21h3.750L17.810 9.940l-3.750-3.750L3 17.250zM20.710 7.040c.39-.39.39-1.020 0-1.410l-2.340-2.340c-.39-.39-1.020-.39-1.410 0l-1.830 1.830 3.750 3.750 1.830-1.830z"/></svg>
<svg class="ic" style="left:980.60px;top:305.90px;width:13.4px;height:13.4px;" viewBox="0 0 24 24"><path fill="#00695c" d="M7 11v2h10v-2H7zm5-9C6.480 2 2 6.480 2 12s4.480 10 10 10 10-4.480 10-10S17.520 2 12 2zm0 18c-4.410 0-8-3.590-8-8s3.590-8 8-8 8 3.590 8 8-3.590 8-8 8z"/></svg>
<div class="abs" style="left:537px;top:330.9px;width:331.2px;height:30.4px;background:#edf4f4;border-bottom:1px solid rgba(0,0,0,.2)"></div>
<div class="t" style="left:660.80px;top:362.70px;font-size:6.1px;letter-spacing:0.456px;color:rgba(0,0,0,.7);">Used by mobile application as an alarm details dashboard</div>
<div class="abs" style="left:458.3px;top:430.3px;width:506.2px;height:138px;border:1px solid rgba(0,0,0,.33);border-radius:2px"></div>
<svg class="ic" style="left:980.30px;top:492.30px;width:13.4px;height:13.4px;" viewBox="0 0 24 24"><path fill="#00695c" d="M7 11v2h10v-2H7zm5-9C6.480 2 2 6.480 2 12s4.480 10 10 10 10-4.480 10-10S17.520 2 12 2zm0 18c-4.410 0-8-3.590-8-8s3.590-8 8-8 8 3.590 8 8-3.590 8-8 8z"/></svg>
<div class="t" style="left:466.50px;top:532.80px;font-size:7.5px;letter-spacing:0.243px;color:rgba(0,0,0,.7);">Mobile dashboard:</div>
<div class="abs" style="left:537px;top:517px;width:216px;height:30.4px;background:#edf4f4;border-bottom:1px solid rgba(0,0,0,.2)"></div>
<div class="t" style="left:545.40px;top:527.10px;font-size:8.6px;letter-spacing:0.372px;color:rgba(0,0,0,.7);">No dashboard selected</div>
<div class="t" style="left:545.40px;top:549.20px;font-size:6.1px;letter-spacing:0.456px;color:rgba(0,0,0,.7);">Used by mobile application as an alarm details dashboard</div>
<div class="btn" style="left:453.6px;top:586.1px;width:71.3px;height:19.9px"></div>
<div class="t" style="left:462.00px;top:590.60px;font-size:7.5px;font-weight:bold;letter-spacing:0.114px;color:#ffffff;">Add alarm rule</div>

<!-- ============ backdrop ============ -->
<div id="backdrop"></div>

<!-- ============ dialog ============ -->
<div id="dlg"><div id="dlgt"></div></div>
<div class="t" style="left:267.50px;top:206.40px;font-size:10.6px;font-weight:bold;letter-spacing:-0.032px;color:#ffffff;line-height:14px;margin-top:-1px">Edit alarm rule condition</div>
<svg class="ic" style="left:731.00px;top:206.10px;width:13px;height:13px;stroke:#fff;stroke-width:.9" viewBox="0 0 24 24"><path fill="#ffffff" d="M19 6.410L17.590 5 12 10.590 6.410 5 5 6.410 10.590 12 5 17.590 6.410 19 12 13.410 17.590 19 19 17.590 13.410 12z"/></svg>
<div class="panel" style="left:272px;top:243.1px;width:470px;height:112.3px"></div>
<div class="t" style="left:285.60px;top:255.30px;font-size:7.5px;font-weight:bold;letter-spacing:0.053px;color:rgba(0,0,0,.87);">Key filters</div>
<svg class="ic" style="left:720.50px;top:253.90px;width:12px;height:12px;" viewBox="0 0 24 24"><path fill="rgba(0,0,0,.6)" d="M12 8l-6 6 1.410 1.410L12 10.830l4.590 4.580L18 14z"/></svg>
<div class="t" style="left:320.90px;top:279.10px;font-size:6.8px;letter-spacing:0.183px;color:rgba(0,0,0,.56);">Key name</div>
<div class="t" style="left:502.50px;top:279.10px;font-size:6.8px;letter-spacing:0.191px;color:rgba(0,0,0,.56);">Key type</div>
<div class="abs" style="left:285.3px;top:290.3px;width:443.5px;height:1px;background:rgba(0,0,0,.09)"></div>
<div class="t" style="left:320.90px;top:297.60px;font-size:7.7px;letter-spacing:0.132px;color:rgba(0,0,0,.62);">batteryLevel</div>
<div class="t" style="left:498.20px;top:297.60px;font-size:7.7px;letter-spacing:0.159px;color:rgba(0,0,0,.62);">Time series</div>
<svg class="ic" style="left:682.40px;top:297.20px;width:13.2px;height:13.2px;" viewBox="0 0 24 24"><path fill="#00695c" d="M3 17.250V21h3.750L17.810 9.940l-3.750-3.750L3 17.250zM20.710 7.040c.39-.39.39-1.020 0-1.410l-2.340-2.340c-.39-.39-1.020-.39-1.410 0l-1.830 1.830 3.750 3.750 1.830-1.830z"/></svg>
<svg class="ic" style="left:709.10px;top:297.40px;width:12.8px;height:12.8px;" viewBox="0 0 24 24"><path fill="#00695c" d="M19 6.410L17.590 5 12 10.590 6.410 5 5 6.410 10.590 12 5 17.590 6.410 19 12 13.410 17.590 19 19 17.590 13.410 12z"/></svg>
<div class="abs" style="left:320.9px;top:316.6px;width:407.9px;height:1px;background:rgba(0,0,0,.09)"></div>
<div class="btn" style="left:285.1px;top:326.4px;width:66.9px;height:19.5px"></div>
<div class="t" style="left:294.10px;top:330.60px;font-size:7.6px;font-weight:bold;letter-spacing:0.058px;color:#ffffff;">Add key filter</div>
<div class="panel" style="left:272px;top:363.8px;width:470px;height:68.4px"></div>
<div class="t" style="left:285.60px;top:375.10px;font-size:7.5px;font-weight:bold;letter-spacing:0.096px;color:rgba(0,0,0,.87);">Filter preview</div>
<svg class="ic" style="left:720.50px;top:374.30px;width:12px;height:12px;" viewBox="0 0 24 24"><path fill="rgba(0,0,0,.6)" d="M12 8l-6 6 1.410 1.410L12 10.830l4.590 4.580L18 14z"/></svg>
<div class="abs" style="left:285.3px;top:399.6px;width:443.2px;height:23.1px;border:1px solid rgba(0,0,0,.24);border-radius:2.2px"></div>
<div class="chip" style="left:292.1px;top:405.4px;width:50.6px;height:11.8px;border-color:rgba(0,0,0,.2)"></div>
<div class="t" style="left:295.40px;top:405.20px;font-size:7.1px;font-weight:bold;letter-spacing:0.206px;color:#305680;">batteryLevel</div>
<div class="t" style="left:345.00px;top:405.40px;font-size:6.6px;letter-spacing:0.298px;color:rgba(0,0,0,.62);">less than</div>
<div class="chip" style="left:375.8px;top:405.4px;width:57.9px;height:11.8px;border-color:rgba(0,0,0,.2)"></div>
<div class="t" style="left:378.60px;top:405.20px;font-size:7.1px;font-weight:bold;letter-spacing:0.222px;color:#00919b;">Current device</div>
<div class="chip" style="left:436.4px;top:405.4px;width:49.2px;height:11.8px;border-color:rgba(0,0,0,.2)"></div>
<div class="t" style="left:438.70px;top:405.20px;font-size:7.1px;font-weight:bold;letter-spacing:0.228px;color:#00919b;">Low_battery</div>
<div class="abs" style="left:272px;top:441px;width:470px;height:31px;background:#e8f1f0;border-bottom:1px solid rgba(0,0,0,.42);border-radius:2.2px 2.2px 0 0"></div>
<div class="t" style="left:280.80px;top:443.30px;font-size:6.2px;letter-spacing:0.420px;color:rgba(0,0,0,.6);">Condition type</div>
<div class="t" style="left:280.80px;top:454.40px;font-size:8.6px;letter-spacing:0.402px;color:rgba(0,0,0,.87);">Simple</div>
<svg class="ic" style="left:724.20px;top:449.60px;width:12px;height:12px;" viewBox="0 0 24 24"><path fill="rgba(0,0,0,.55)" d="M7 10l5 5 5-5z"/></svg>
<div class="t" style="left:680.90px;top:506.10px;font-size:7.5px;font-weight:bold;letter-spacing:0.061px;color:#00695c;">Cancel</div>
<div class="btn" style="left:715.8px;top:502.6px;width:35.3px;height:19.1px"></div>
<div class="t" style="left:724.30px;top:506.10px;font-size:7.5px;font-weight:bold;letter-spacing:-0.072px;color:#ffffff;">Save</div>

<!-- ============ annotation (red arrow + box) ============ -->
<svg class="ic" style="left:0;top:0;width:1014px;height:721px" viewBox="0 0 1014 721">
  <polygon fill="#f04848" points="571.5,455.8 699.5,493.3 698.2,491 712,498.2 697,501.3 699,496.2"/>
  <path fill="#55555a" d="M0 0h2.600L0 2.600z"/><path fill="#55555a" d="M1014 0h-2.600l2.600 2.600z"/>
  <rect x="711.7" y="500.1" width="42.8" height="25.4" fill="none" stroke="#f04848" stroke-width="2.4"/>
</svg>
</body></html>
